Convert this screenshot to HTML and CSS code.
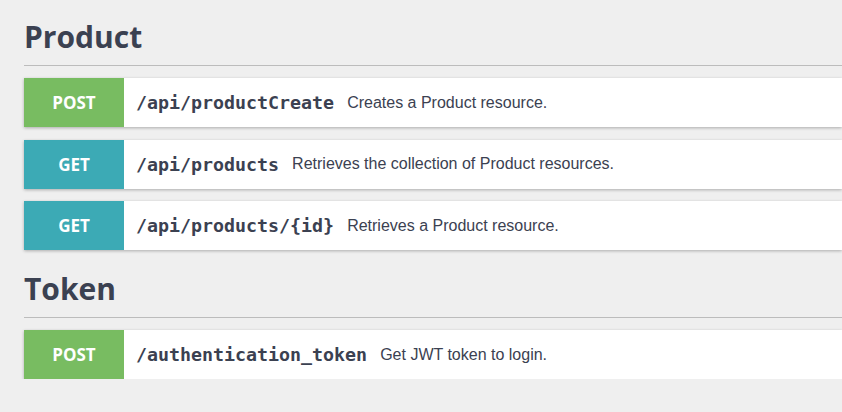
FILE: index.html
```html
<!DOCTYPE html>
<html>
<head>
<meta charset="utf-8">
<link rel="stylesheet" href="styles.css">
</head>
<body>
<div class="page">
  <section class="tag">
    <h2 class="tag-title">Product</h2>
    <div class="ops">
      <div class="op">
        <span class="method post">POST</span>
        <span class="path">/api/productCreate</span>
        <span class="desc">Creates a Product resource.</span>
      </div>
      <div class="op">
        <span class="method get">GET</span>
        <span class="path">/api/products</span>
        <span class="desc">Retrieves the collection of Product resources.</span>
      </div>
      <div class="op">
        <span class="method get">GET</span>
        <span class="path">/api/products/{id}</span>
        <span class="desc">Retrieves a Product resource.</span>
      </div>
    </div>
  </section>
  <section class="tag">
    <h2 class="tag-title">Token</h2>
    <div class="ops">
      <div class="op">
        <span class="method post">POST</span>
        <span class="path">/authentication_token</span>
        <span class="desc">Get JWT token to login.</span>
      </div>
    </div>
  </section>
</div>
</body>
</html>
```

FILE: styles.css
```css
html, body {
  margin: 0;
  padding: 0;
  background: #efefef;
  overflow: hidden;
}
.page {
  padding: 0 0 0 24px;
  display: flex;
  flex-direction: column;
  gap: 2px;
}
.tag-title {
  margin: 0;
  padding: 17px 0 8px;
  font-family: "Open Sans", sans-serif;
  font-weight: 700;
  font-size: 30px;
  line-height: 40px;
  color: #3b4151;
  border-bottom: 1px solid #bcbcbc;
}
.ops {
  display: flex;
  flex-direction: column;
  gap: 12.5px;
  padding-top: 12px;
}
.op {
  display: flex;
  align-items: center;
  height: 49px;
  background: #fff;
  box-shadow: 0 1px 3px rgba(0, 0, 0, 0.28);
}
.method {
  flex: 0 0 100px;
  align-self: stretch;
  display: flex;
  align-items: center;
  justify-content: center;
  font-family: "Open Sans", sans-serif;
  font-weight: 700;
  font-size: 17px;
  color: #fff;
}
.post { background: #78bc61; }
.get { background: #3caab5; }
.path {
  margin-left: 12px;
  font-family: "DejaVu Sans Mono", monospace;
  font-weight: 700;
  font-size: 18.3px;
  color: #3b4151;
}
.desc {
  margin-left: 13px;
  font-family: "Liberation Sans", Arial, sans-serif;
  font-size: 16px;
  color: #3b4151;
}
```
